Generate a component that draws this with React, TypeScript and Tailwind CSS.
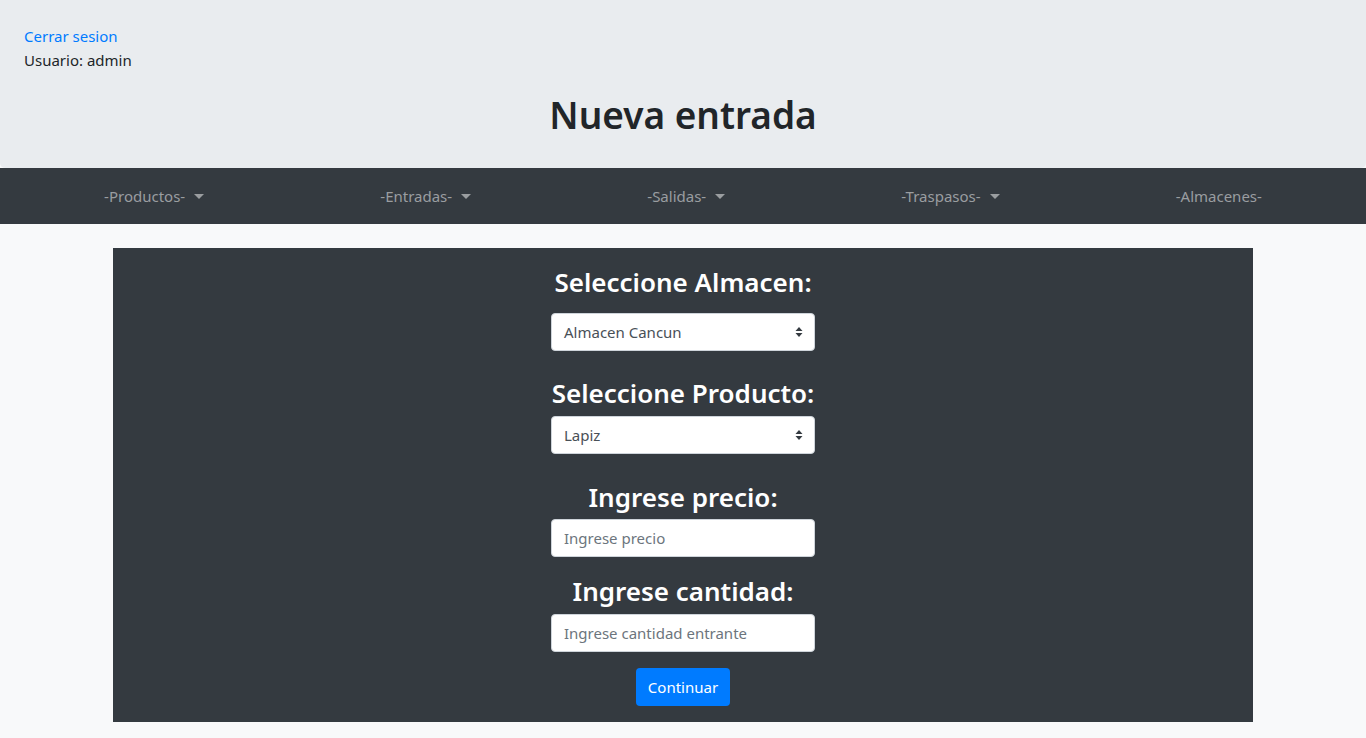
import { ReactNode } from "react";

const font = { fontFamily: '"Segoe UI", "Noto Sans", "Liberation Sans", sans-serif' };

//------->Caret for dropdown items<---------
const Caret = () => (
  <span className="ml-[9px] inline-block w-0 h-0 border-x-[5px] border-x-transparent border-t-[5px] border-t-current align-[3px]" />
);

const NavItem = ({ label, dropdown }: { label: string; dropdown?: boolean }) => (
  <a className="text-[15px] text-[#9a9da0] cursor-pointer">
    {label}
    {dropdown && <Caret />}
  </a>
);

const SelectArrows = () => (
  <svg width="8" height="12" viewBox="0 0 8 12" className="text-[#343a40]">
    <path d="M4 1 L7.5 5 H0.5 Z" fill="currentColor" />
    <path d="M4 11 L7.5 7 H0.5 Z" fill="currentColor" />
  </svg>
);

const FakeSelect = ({ value }: { value: string }) => (
  <div className="w-[264px] h-[38px] bg-white border border-[#ced4da] rounded-[4px] flex items-center justify-between pl-[12px] pr-[11px] text-[15px] text-[#495057]">
    <span>{value}</span>
    <SelectArrows />
  </div>
);

const Label = ({ children, className }: { children: ReactNode; className: string }) => (
  <h3 className={`text-[26px] leading-[34px] font-semibold text-white ${className}`}>{children}</h3>
);

const Field = ({ placeholder }: { placeholder: string }) => (
  <input
    placeholder={placeholder}
    className="w-[264px] h-[38px] bg-white border border-[#ced4da] rounded-[4px] px-[12px] text-[15px] text-[#495057] placeholder:text-[#6c757d] outline-none"
  />
);

export default function App() {
  return (
    <div style={font} className="min-h-[738px] bg-[#f8f9fa] text-[#212529]">
      <header className="bg-[#e9ecef] rounded-b-[5px] px-6 pt-6 pb-[29px]">
        <a className="block text-[15px] leading-6 text-[#007bff] cursor-pointer">Cerrar sesion</a>
        <p className="text-[15px] leading-6">Usuario: admin</p>
        <h1 className="mt-[19px] text-[37px] leading-[48px] font-semibold text-center">Nueva entrada</h1>
      </header>

      <nav className="bg-[#343a40] h-14 px-4 flex items-center justify-around">
        <NavItem label="-Productos-" dropdown />
        <NavItem label="-Entradas-" dropdown />
        <NavItem label="-Salidas-" dropdown />
        <NavItem label="-Traspasos-" dropdown />
        <NavItem label="-Almacenes-" />
      </nav>

      <main className="mx-auto mt-6 w-[1140px] bg-[#343a40] flex flex-col items-center pt-[17px] pb-4">
        <Label className="mb-[14px]">Seleccione Almacen:</Label>
        <FakeSelect value="Almacen Cancun" />
        <Label className="mt-[25px] mb-[6px]">Seleccione Producto:</Label>
        <FakeSelect value="Lapiz" />
        <Label className="mt-[26px] mb-[5px]">Ingrese precio:</Label>
        <Field placeholder="Ingrese precio" />
        <Label className="mt-[17px] mb-[6px]">Ingrese cantidad:</Label>
        <Field placeholder="Ingrese cantidad entrante" />
        <button className="mt-4 h-[38px] px-[12px] rounded-[4px] bg-[#007bff] text-white text-[15px]">Continuar</button>
      </main>
    </div>
  );
}
